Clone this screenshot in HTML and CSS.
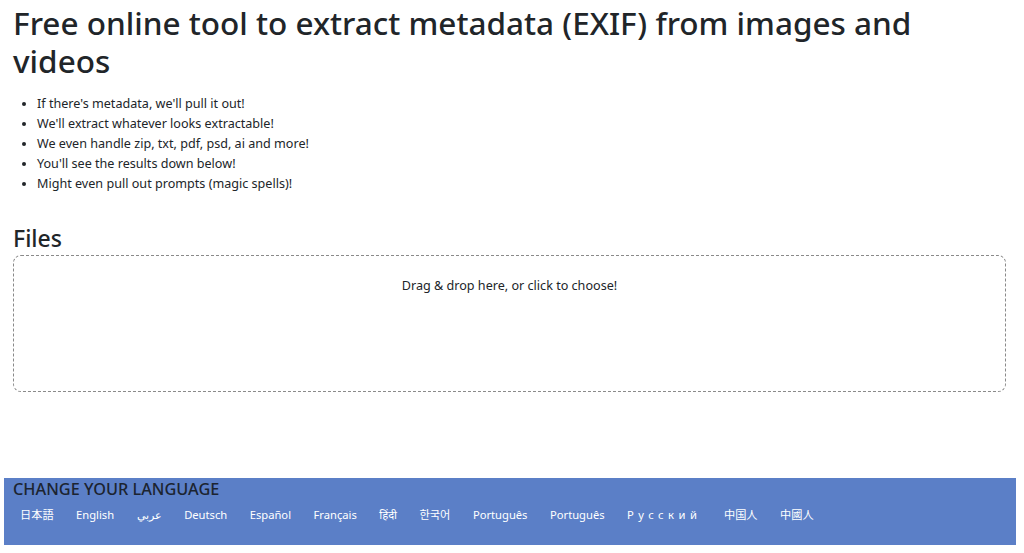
FILE: index.html
```html
<!DOCTYPE html>
<html lang="en">
<head>
<meta charset="utf-8">
<title>EXIF metadata extractor</title>
<link rel="stylesheet" href="styles.css">
</head>
<body>
<main class="page">
  <h1 class="title">Free online tool to extract metadata (EXIF) from images and videos</h1>
  <ul class="features">
    <li>If there's metadata, we'll pull it out!</li>
    <li>We'll extract whatever looks extractable!</li>
    <li>We even handle zip, txt, pdf, psd, ai and more!</li>
    <li>You'll see the results down below!</li>
    <li>Might even pull out prompts (magic spells)!</li>
  </ul>
  <h2 class="section-title">Files</h2>
  <div class="dropzone">Drag &amp; drop here, or click to choose!</div>
</main>
<footer class="lang-bar">
  <h3 class="lang-title">CHANGE YOUR LANGUAGE</h3>
  <nav class="lang-list">
    <a href="#">日本語</a>
    <a href="#">English</a>
    <a href="#">عربي</a>
    <a href="#">Deutsch</a>
    <a href="#">Español</a>
    <a href="#">Français</a>
    <a href="#">हिंदी</a>
    <a href="#">한국어</a>
    <a href="#">Português</a>
    <a href="#">Português</a>
    <a href="#" class="spaced">Русский</a>
    <a href="#">中国人</a>
    <a href="#">中國人</a>
  </nav>
</footer>
</body>
</html>
```
FILE: styles.css
```css
html, body {
  margin: 0;
  padding: 0;
  background: #ffffff;
}
body {
  font-family: "Noto Sans", "Noto Sans CJK JP", sans-serif;
  color: #212529;
}
.page {
  padding: 4px 18px 0 13px;
}
.title {
  margin: 0;
  font-size: 31.5px;
  font-weight: 500;
  line-height: 38px;
}
.features {
  margin: 14px 0 0;
  padding-left: 24px;
  font-size: 12.6px;
  line-height: 20px;
}
.section-title {
  margin: 31px 0 0;
  font-size: 23px;
  font-weight: 500;
  line-height: 26px;
}
.dropzone {
  margin-top: 4px;
  height: 137px;
  box-sizing: border-box;
  border: 1px dashed #8a8a8a;
  border-radius: 8px;
  padding-top: 21px;
  text-align: center;
  font-size: 12.6px;
  line-height: 18px;
}
.lang-bar {
  margin: 86px 8px 0 4px;
  background: #5b7fc7;
  height: 67px;
  padding: 1px 9px 0;
  box-sizing: border-box;
}
.lang-title {
  margin: 0;
  font-size: 16.3px;
  font-weight: 500;
  line-height: 20px;
  color: #1c2430;
}
.lang-list {
  display: flex;
  gap: 22.5px;
  padding: 8px 7px 0;
  font-size: 11.2px;
  line-height: 16px;
}
.lang-list a {
  color: #ffffff;
  text-decoration: none;
}
.lang-list .spaced {
  letter-spacing: 4.5px;
}
```
